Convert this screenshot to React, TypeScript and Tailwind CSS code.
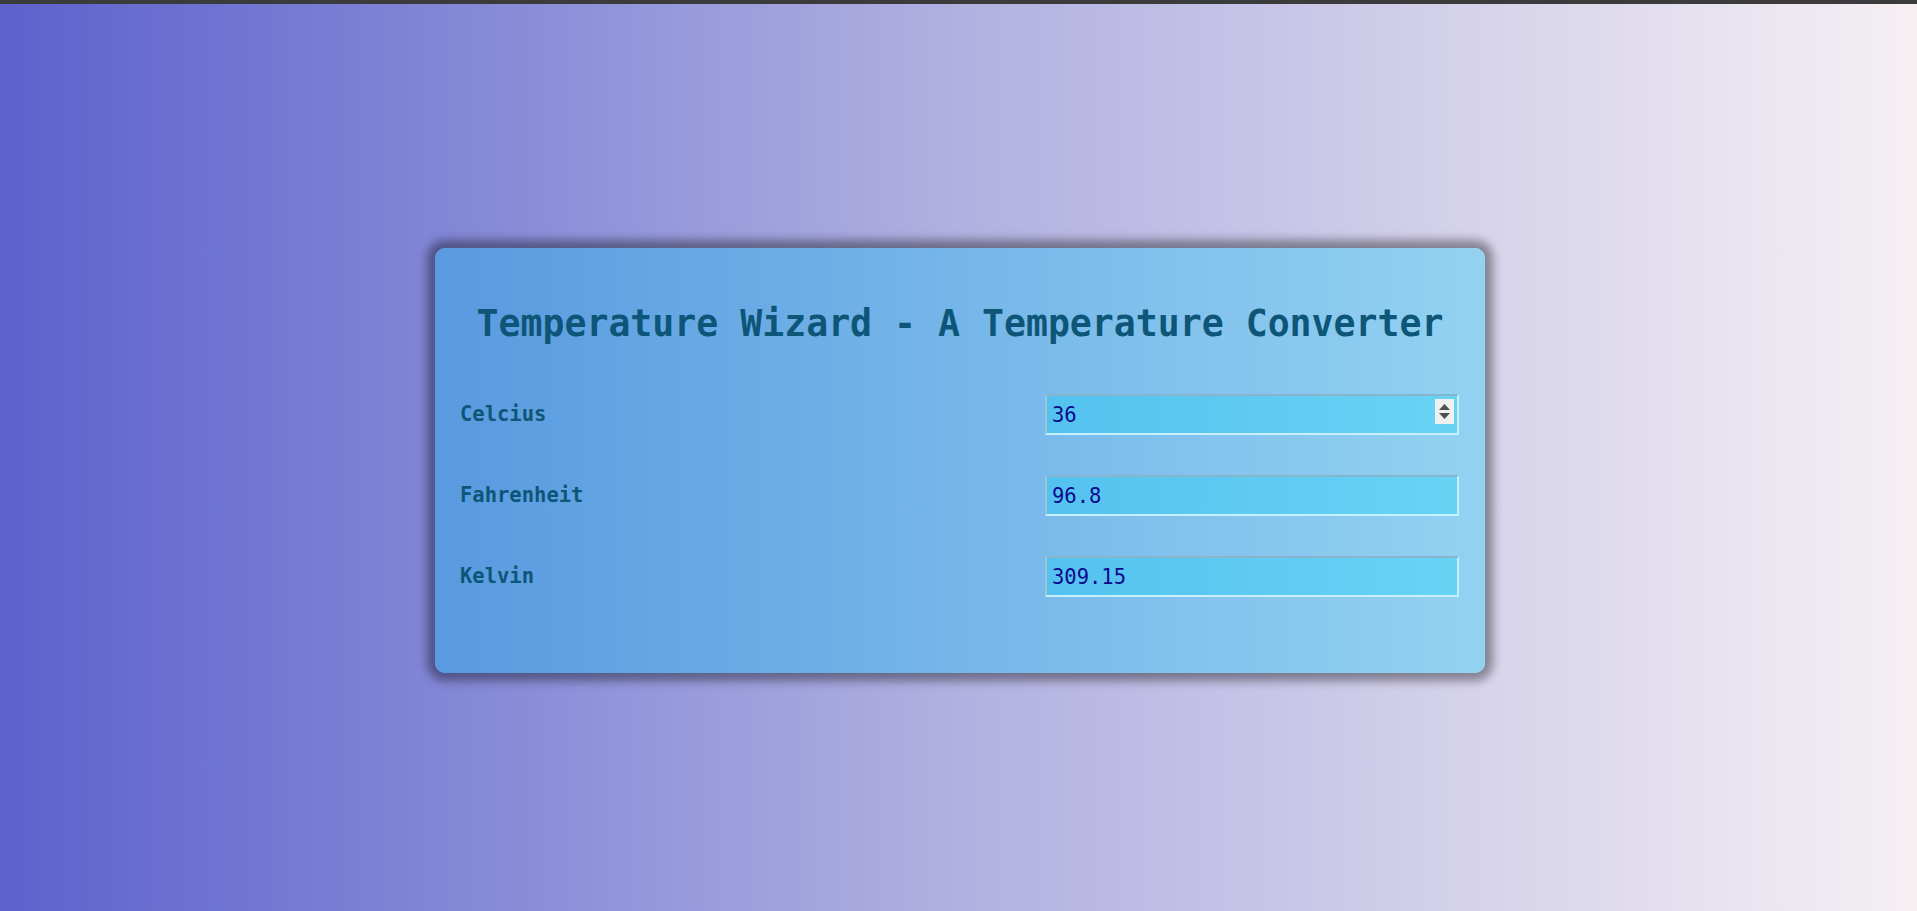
import { useState } from "react";

const MONO = "font-['DejaVu_Sans_Mono','Liberation_Mono',monospace]";

function Spinner() {
  return (
    <div className="absolute right-[5px] top-[5px] w-[19px] h-[25px] bg-[#f0f0f0] flex flex-col items-center justify-center gap-[3px]">
      <svg width="11" height="6" viewBox="0 0 11 6">
        <path d="M5.5 0 L11 6 L0 6 Z" fill="#505050" />
      </svg>
      <svg width="11" height="6" viewBox="0 0 11 6">
        <path d="M0 0 L11 0 L5.5 6 Z" fill="#505050" />
      </svg>
    </div>
  );
}

function Row({
  label,
  value,
  onChange,
  spinner,
}: {
  label: string;
  value: string;
  onChange: (v: string) => void;
  spinner?: boolean;
}) {
  return (
    <div className="flex items-center justify-between h-[41px]">
      <label className={`${MONO} text-[20.5px] font-bold text-[#0d5677] pl-[25px]`}>{label}</label>
      <div className="relative w-[414px] h-[41px]">
        <input
          type="text"
          value={value}
          onChange={(e) => onChange(e.target.value)}
          className={`${MONO} w-full h-full px-[5px] text-[20.5px] text-[#0c0a8c] outline-none bg-gradient-to-r from-[#54c2f0] to-[#69d3f4] border-2 border-t-[#86b6cd] border-l-[#9cc6da] border-b-[#c6f0fb] border-r-[#c6f0fb]`}
        />
        {spinner && <Spinner />}
      </div>
    </div>
  );
}

export default function App() {
  const [celsius, setCelsius] = useState("36");
  const c = parseFloat(celsius);
  const fahrenheit = isNaN(c) ? "" : String(Math.round((c * 9 / 5 + 32) * 100) / 100);
  const kelvin = isNaN(c) ? "" : String(Math.round((c + 273.15) * 100) / 100);

  return (
    <div className="h-screen overflow-hidden bg-gradient-to-r from-[#5d61cc] via-[#b1b0e0] to-[#f6f0f3]">
      <div className="h-[4px] bg-[#3b3b3b]" />
      <div className="pt-[244px]">
        <div className="ml-[435px] w-[1050px] rounded-[10px] bg-gradient-to-r from-[#599ae0] to-[#93d2f1] shadow-[0_0_10px_8px_rgba(0,0,0,0.38)] pt-[54px] pb-[76px] pr-[26px]">
          <h1 className={`${MONO} text-[36.5px] leading-[44px] font-bold text-[#0d5677] text-center pl-[26px]`}>
            Temperature Wizard - A Temperature Converter
          </h1>
          <div className="mt-[48px] flex flex-col gap-[40px]">
            <Row label="Celcius" value={celsius} onChange={setCelsius} spinner />
            <Row label="Fahrenheit" value={fahrenheit} onChange={() => {}} />
            <Row label="Kelvin" value={kelvin} onChange={() => {}} />
          </div>
        </div>
      </div>
    </div>
  );
}
